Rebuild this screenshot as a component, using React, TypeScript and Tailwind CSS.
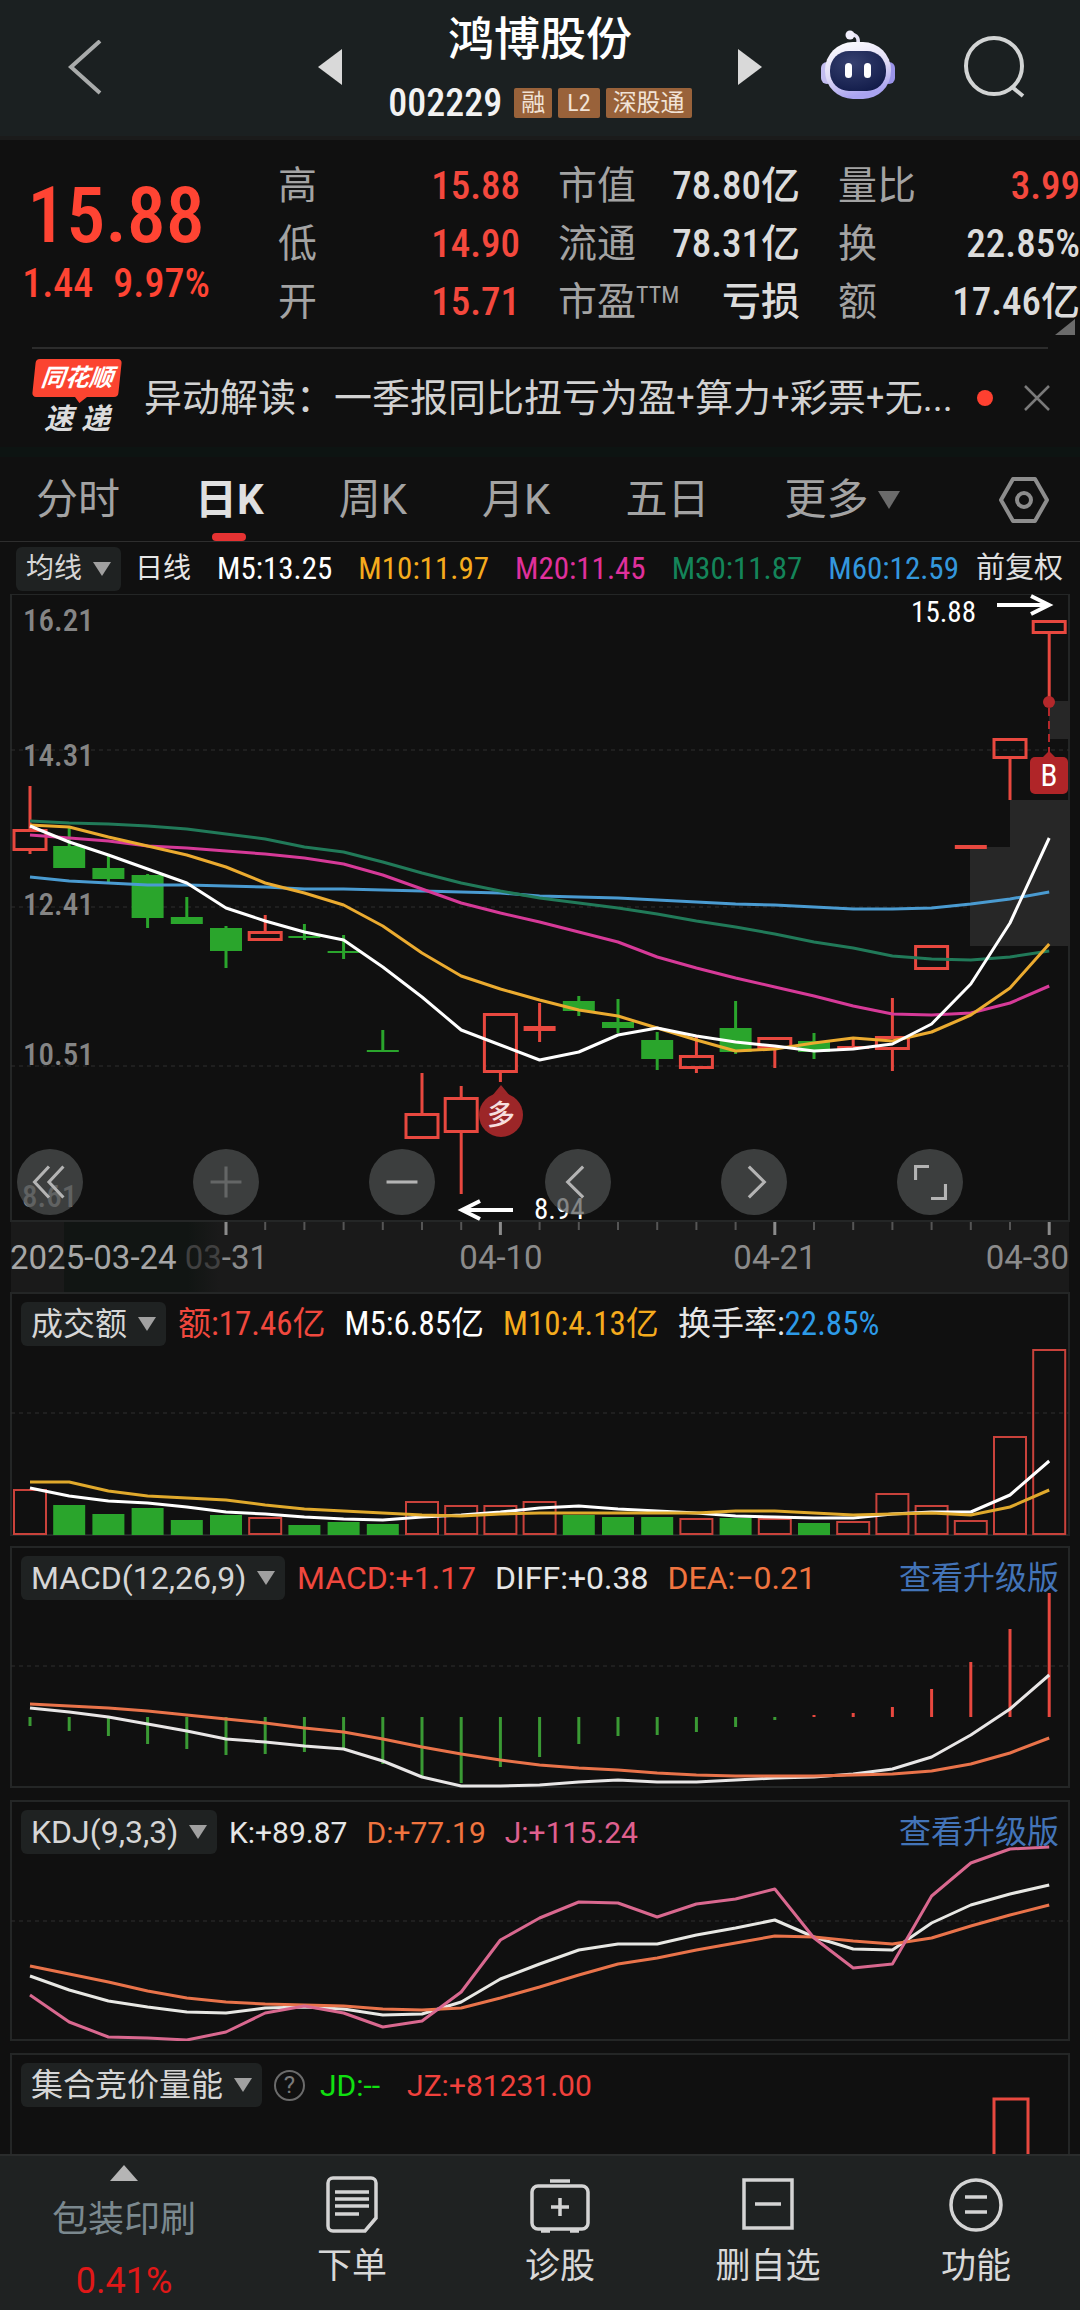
import React from "react";
import clsx from "clsx";

// Horizontal position of the n-th trading day, shared by all charts
const colX = (i: number) => 30 + i * 39.2;

const toPoints = (ys: number[]) => ys.map((y, i) => `${colX(i)},${y}`).join(" ");

const RED = "#e8483f";
const GREEN = "#2aa52c";

// [direction, body top, body bottom, wick top, wick bottom]
type Candle = ["up" | "down", number, number, number, number];

const candles: Candle[] = [
    ["up", 829, 851, 786, 854],
    ["down", 846, 868, 827, 868],
    ["down", 868, 879, 856, 882],
    ["down", 875, 918, 874, 928],
    ["down", 917, 924, 897, 924],
    ["down", 928, 951, 926, 968],
    ["up", 931, 941, 915, 941],
    ["down", 936, 938, 924, 940],
    ["down", 951, 953, 935, 959],
    ["down", 1050, 1052, 1030, 1052],
    ["up", 1113, 1139, 1073, 1139],
    ["up", 1097, 1133, 1086, 1194],
    ["up", 1013, 1073, 1013, 1082],
    ["up", 1026, 1031, 1003, 1042],
    ["down", 1001, 1011, 996, 1016],
    ["down", 1022, 1028, 999, 1033],
    ["down", 1040, 1059, 1032, 1070],
    ["up", 1055, 1069, 1037, 1073],
    ["down", 1028, 1052, 1001, 1054],
    ["up", 1037, 1049, 1037, 1068],
    ["down", 1041, 1052, 1033, 1059],
    ["up", 1046, 1049, 1038, 1049],
    ["up", 1036, 1050, 998, 1071],
    ["up", 945, 970, 945, 970],
    ["up", 845, 849, 845, 849],
    ["up", 738, 759, 738, 800],
    ["up", 620, 634, 620, 702],
];

const priceLines = [
    { color: "#4a9bd1", ys: [877, 881, 883, 885, 885, 886, 887, 889, 889, 890, 891, 892, 893, 896, 897, 898, 900, 902, 904, 905, 907, 909, 909, 908, 904, 899, 892] },
    { color: "#217a59", ys: [821, 823, 824, 826, 829, 834, 839, 847, 852, 862, 873, 883, 891, 898, 903, 908, 914, 921, 927, 934, 942, 948, 956, 959, 960, 957, 951] },
    { color: "#d63a98", ys: [835, 838, 841, 846, 848, 851, 854, 858, 864, 875, 889, 903, 913, 922, 932, 942, 957, 968, 978, 987, 996, 1006, 1014, 1015, 1013, 1003, 986] },
    { color: "#ebab30", ys: [825, 827, 837, 846, 855, 867, 883, 893, 905, 926, 953, 976, 989, 1000, 1010, 1016, 1028, 1040, 1051, 1049, 1043, 1038, 1041, 1032, 1015, 988, 944] },
    { color: "#ffffff", ys: [826, 842, 855, 869, 883, 908, 921, 932, 940, 967, 997, 1030, 1045, 1060, 1052, 1035, 1028, 1036, 1042, 1046, 1051, 1049, 1044, 1024, 984, 923, 838] },
];

const volumeTops = [1490, 1505, 1514, 1508, 1520, 1515, 1518, 1525, 1522, 1524, 1502, 1506, 1506, 1502, 1515, 1517, 1517, 1519, 1518, 1519, 1523, 1522, 1494, 1506, 1521, 1437, 1350];
const volumeM5 = [1488, 1496, 1501, 1503, 1507, 1512, 1514, 1517, 1519, 1520, 1517, 1515, 1512, 1508, 1506, 1509, 1511, 1513, 1516, 1517, 1518, 1518, 1514, 1512, 1512, 1495, 1461];
const volumeM10 = [1482, 1482, 1491, 1496, 1498, 1500, 1505, 1509, 1511, 1513, 1515, 1516, 1514, 1513, 1513, 1513, 1513, 1513, 1511, 1511, 1513, 1515, 1514, 1513, 1515, 1507, 1490];

const macdBars = [1726, 1731, 1736, 1744, 1749, 1755, 1754, 1752, 1749, 1764, 1777, 1783, 1767, 1757, 1744, 1736, 1735, 1732, 1727, 1720, 1715, 1713, 1707, 1689, 1662, 1629, 1593];
const macdDiff = [1708, 1712, 1717, 1724, 1731, 1739, 1742, 1746, 1749, 1761, 1777, 1786, 1786, 1785, 1782, 1780, 1782, 1782, 1780, 1778, 1777, 1774, 1769, 1757, 1735, 1709, 1675];
const macdDea = [1704, 1706, 1708, 1711, 1715, 1719, 1723, 1728, 1732, 1739, 1747, 1754, 1760, 1765, 1768, 1770, 1773, 1775, 1776, 1776, 1776, 1775, 1774, 1771, 1764, 1753, 1738];

const kdjK = [1976, 1990, 2001, 2007, 2012, 2013, 2008, 2007, 2009, 2015, 2014, 2002, 1979, 1964, 1950, 1944, 1944, 1935, 1928, 1920, 1937, 1949, 1950, 1923, 1905, 1894, 1885];
const kdjD = [1966, 1974, 1982, 1991, 1998, 2002, 2004, 2005, 2006, 2009, 2010, 2008, 1998, 1987, 1975, 1964, 1958, 1950, 1943, 1936, 1937, 1941, 1944, 1938, 1926, 1915, 1905];
const kdjJ = [1995, 2022, 2037, 2038, 2040, 2032, 2013, 2006, 2013, 2027, 2021, 1992, 1940, 1918, 1902, 1903, 1917, 1904, 1899, 1889, 1938, 1968, 1964, 1896, 1863, 1849, 1847];

const Line = ({ ys, color, width = 3 }: { ys: number[]; color: string; width?: number }) => (
    <polyline points={toPoints(ys)} fill="none" stroke={color} strokeWidth={width} strokeLinejoin="round" />
);

const GridLine = ({ y }: { y: number }) => (
    <line x1="11" x2="1069" y1={y} y2={y} stroke="#2e2e2e" strokeWidth="1" strokeDasharray="4 4" />
);

const Frame = ({ top, bottom }: { top: number; bottom: number }) => (
    <rect x="11" y={top + 1} width="1058" height={bottom - top - 2} fill="none" stroke="#242626" strokeWidth="2" />
);

const Triangle = ({ className }: { className?: string }) => (
    <svg viewBox="0 0 18 14" className={clsx("pointer-events-none h-[14px] w-[18px] shrink-0", className)} fill="currentColor" aria-hidden="true">
        <path d="M0 0h18L9 14z" />
    </svg>
);

const Picker = ({ name, value, className }: { name: string; value: string; className?: string }) => (
    <label className={clsx("flex h-[44px] items-center gap-[10px] rounded-md bg-[#1f2222] px-[10px] text-[#d6d6d6]", className)}>
        <select aria-label={name} className="appearance-none bg-transparent leading-[44px] outline-none">
            <option>{value}</option>
        </select>
        <Triangle className="text-[#a0a0a0]" />
    </label>
);

interface IndicatorPanelProps {
    name: string;
    viewBox: string;
    chart: React.ReactNode;
    children: React.ReactNode;
    className?: string;
    link?: boolean;
}

// Header row and drawing share one grid cell, so the chart runs beneath the texts
const IndicatorPanel = ({ name, viewBox, chart, children, className, link }: IndicatorPanelProps) => (
    <section className={clsx("grid", className)}>
        <svg viewBox={viewBox} className="col-start-1 row-start-1 block h-auto w-full" aria-hidden="true">
            {chart}
        </svg>
        <div className="z-10 col-start-1 row-start-1 mt-[10px] flex h-[44px] items-center gap-[19px] self-start px-[21px] whitespace-nowrap">
            <Picker name="指标" value={name} className="-mr-[7px] text-[32px]" />
            {children}
            {link && (
                <a href="#upgrade" className="ml-auto text-[32px] text-[#4374b8]">
                    查看升级版
                </a>
            )}
        </div>
    </section>
);

const Header = () => (
    <header className="grid h-[140px] grid-cols-[1fr_444px_1fr] items-center border-b-4 border-[#1b1b1b] bg-[#1b2021]">
        <button aria-label="返回" className="ml-[66px] justify-self-start">
            <svg viewBox="0 0 36 56" className="h-[56px] w-[36px]" fill="none" stroke="#a9abab" strokeWidth="4">
                <path d="M34 1 5 27l29 26" />
            </svg>
        </button>
        <div className="flex items-center justify-between">
            <button aria-label="上一只" className="pb-[2px]">
                <svg viewBox="0 0 24 36" className="h-[36px] w-[24px]" fill="#d9d9d9">
                    <path d="M24 0v36L0 18z" />
                </svg>
            </button>
            <div className="flex flex-col items-center pt-[6px]">
                <h1 className="text-[46px] leading-[64px] font-medium text-white">鸿博股份</h1>
                <div className="flex items-center gap-[6px] text-[24px] leading-[30px] text-[#f1e3d6]">
                    <span className="mr-[6px] text-[38px] leading-[64px] font-medium text-[#f2f2f2]">002229</span>
                    <span className="rounded-xs bg-[#99623a] px-[7px]">融</span>
                    <span className="rounded-xs bg-[#99623a] px-[9px]">L2</span>
                    <span className="rounded-xs bg-[#99623a] px-[7px]">深股通</span>
                </div>
            </div>
            <button aria-label="下一只" className="pb-[2px]">
                <svg viewBox="0 0 24 36" className="h-[36px] w-[24px]" fill="#d9d9d9">
                    <path d="M0 0v36l24-18z" />
                </svg>
            </button>
        </div>
        <div className="flex items-center justify-between pr-[54px] pl-[58px]">
            <button aria-label="智能助手" className="pb-[6px]">
                <svg viewBox="0 0 76 70" className="h-[70px] w-[76px]">
                    <defs>
                        <linearGradient id="shell" x1="0" y1="0" x2="0.3" y2="1">
                            <stop offset="0" stopColor="#ffffff" />
                            <stop offset="0.6" stopColor="#ded9f5" />
                            <stop offset="1" stopColor="#a9a3f0" />
                        </linearGradient>
                        <radialGradient id="visor" cx="0.4" cy="0.3" r="0.8">
                            <stop offset="0" stopColor="#36406f" />
                            <stop offset="1" stopColor="#101a48" />
                        </radialGradient>
                    </defs>
                    <path d="M38 14c1-6-1-9-7-10" fill="none" stroke="#e6e2f5" strokeWidth="3.5" />
                    <circle cx="30" cy="5" r="4.5" fill="#f1eefc" />
                    <rect x="1" y="32" width="12" height="22" rx="6" fill="#c3bdf0" />
                    <rect x="63" y="32" width="12" height="22" rx="6" fill="#9a93e8" />
                    <rect x="5" y="12" width="66" height="57" rx="28" fill="url(#shell)" />
                    <rect x="10" y="21" width="56" height="40" rx="19" fill="url(#visor)" />
                    <rect x="25" y="33" width="7" height="15" rx="3.5" fill="#fff" />
                    <rect x="44" y="33" width="7" height="15" rx="3.5" fill="#fff" />
                </svg>
            </button>
            <button aria-label="搜索">
                <svg viewBox="0 0 64 64" className="h-[64px] w-[64px]" fill="none" stroke="#d2d4d4" strokeWidth="4">
                    <circle cx="32" cy="30" r="28" />
                    <path d="M50 51l11 9" />
                </svg>
            </button>
        </div>
    </header>
);

interface Stat {
    label: React.ReactNode;
    value: string;
    up?: boolean;
}

const stats: Stat[] = [
    { label: "高", value: "15.88", up: true },
    { label: "市值", value: "78.80亿" },
    { label: "量比", value: "3.99", up: true },
    { label: "低", value: "14.90", up: true },
    { label: "流通", value: "78.31亿" },
    { label: "换", value: "22.85%" },
    { label: "开", value: "15.71", up: true },
    { label: <>市盈<sup className="top-0 align-[12px] text-[24px] leading-none">TTM</sup></>, value: "亏损" },
    { label: "额", value: "17.46亿" },
];

const Quote = () => (
    <section className="relative flex pt-[17px] pb-4">
        <div className="w-[278px] pt-[18px]">
            <div className="w-[232px] text-center font-medium text-[#ff4433]">
                <p className="text-[78px] leading-[82px]">15.88</p>
                <p className="flex justify-center gap-5 text-[40px] leading-[54px]">
                    <span>1.44</span>
                    <span>9.97%</span>
                </p>
            </div>
        </div>
        <dl className="grid flex-1 grid-cols-3 gap-x-[38px] text-[39px] leading-[58px] whitespace-nowrap">
            {stats.map(({ label, value, up }) => (
                <div className="flex justify-between" key={value}>
                    <dt className="text-[#a3a3a3]">{label}</dt>
                    <dd className={clsx("font-medium", up ? "text-[#f4483d]" : "text-[#dcdcdc]")}>{value}</dd>
                </div>
            ))}
        </dl>
        <svg viewBox="0 0 20 16" className="absolute right-[5px] bottom-[12px] h-[16px] w-[20px]" fill="#6b6b6b" aria-hidden="true">
            <path d="M20 0v16H0z" />
        </svg>
    </section>
);

const News = () => (
    <section className="mx-8 flex h-[100px] items-center border-t-2 border-[#2c2c2c]">
        <div className="flex w-[90px] flex-col items-center font-bold italic">
            <span className="relative -skew-x-6 rounded-sm bg-[#fb4430] px-[7px] text-[24px] leading-[38px] text-white">
                同花顺
                <svg viewBox="0 0 12 6" className="absolute top-full left-1/2 h-[6px] w-[12px]" fill="#fb4430" aria-hidden="true">
                    <path d="M0 0h12L5 6z" />
                </svg>
            </span>
            <span className="flex gap-2 pt-1 text-[29px] leading-[36px] text-[#dcdcdc]">
                <span>速</span>
                <span>递</span>
            </span>
        </div>
        <a href="#news" className="ml-[22px] min-w-0 flex-1 truncate text-[38px] leading-[56px] text-[#d2d2d2]">
            异动解读：一季报同比扭亏为盈+算力+彩票+无...
        </a>
        <span className="mr-[31px] ml-4 size-4 rounded-full bg-[#ff4030]" />
        <button aria-label="关闭" className="-mr-[2px]">
            <svg viewBox="0 0 26 26" className="size-[26px]" stroke="#7a7a7a" strokeWidth="2.5">
                <path d="M1 1l24 24M25 1L1 25" />
            </svg>
        </button>
    </section>
);

const tabs = ["分时", "日K", "周K", "月K", "五日"];

const Tabs = () => (
    <nav className="flex h-[84px] items-stretch gap-[75px] border-b border-[#2e2e2e] px-[36px] font-[Roboto,'Noto_Sans_CJK_SC',sans-serif] text-[42px] whitespace-nowrap text-[#a3a3a3]">
        {tabs.map((tab) => (
            <button key={tab} className={clsx("relative", tab === "日K" && "font-bold text-[#e0e0e0]")}>
                {tab}
                {tab === "日K" && <span className="absolute bottom-0 left-1/2 h-2 w-[34px] -translate-x-1/2 rounded-sm bg-[#e63232]" />}
            </button>
        ))}
        <button className="flex items-center gap-[10px]">
            更多
            <svg viewBox="0 0 22 18" className="h-[18px] w-[22px]" fill="#6b6b6b" aria-hidden="true">
                <path d="M0 0h22L11 18z" />
            </svg>
        </button>
        <button aria-label="设置" className="-mr-[6px] ml-auto">
            <svg viewBox="0 0 52 48" className="h-[48px] w-[52px]" fill="none" stroke="#8d8d8d" strokeWidth="4" strokeLinejoin="round">
                <path d="M15 3h22l12 21-12 21H15L3 24z" />
                <circle cx="26" cy="24" r="7" />
            </svg>
        </button>
    </nav>
);

const Averages = () => (
    <div className="flex h-[52px] items-center gap-[26px] px-4 pt-[2px] text-[31px] whitespace-nowrap">
        <Picker name="均线" value="均线" className="-mr-[12px] text-[28px]" />
        <span className="text-[28px] text-[#e6e6e6]">日线</span>
        <span className="text-white">M5:13.25</span>
        <span className="text-[#f5ab1d]">M10:11.97</span>
        <span className="text-[#e0309c]">M20:11.45</span>
        <span className="text-[#14855a]">M30:11.87</span>
        <span className="text-[#3497dc]">M60:12.59</span>
        <span className="-ml-[9px] text-[29px] text-[#e0e0e0]">前复权</span>
    </div>
);

const priceLabels: [string, number][] = [["16.21", 631], ["14.31", 766], ["12.41", 915], ["10.51", 1065]];

const chartButtons = [
    { name: "最早", d: "M31 17 17 32l14 15M45 17 31 32l14 15", color: "#b4b4b4" },
    { name: "放大", d: "M17 32h30M32 17v30", color: "#646666" },
    { name: "缩小", d: "M17 32h30", color: "#b4b4b4" },
    { name: "向左", d: "M37 17 22 32l15 15", color: "#b4b4b4" },
    { name: "向右", d: "M27 17l15 15-15 15", color: "#b4b4b4" },
    { name: "全屏", d: "M18 30V17h13M47 34v14H33", color: "#b4b4b4" },
];

const CandleShape = ({ candle, x }: { candle: Candle; x: number }) => {
    const [dir, top, bottom, high, low] = candle;
    const color = dir === "up" ? RED : GREEN;
    const solid = dir === "down" || bottom - top < 6;
    return (
        <g>
            {high < top && <line x1={x} x2={x} y1={high} y2={top} stroke={color} strokeWidth="3" />}
            {low > bottom && <line x1={x} x2={x} y1={bottom} y2={low} stroke={color} strokeWidth="3" />}
            {solid ? (
                <rect x={x - 16} y={top} width="32" height={bottom - top} fill={color} />
            ) : (
                <rect x={x - 16} y={top + 1.5} width="32" height={bottom - top - 3} fill="none" stroke={color} strokeWidth="3" />
            )}
        </g>
    );
};

const PriceChart = () => (
    <section className="relative">
        <svg viewBox="0 594 1080 698" className="block h-auto w-full">
            <defs>
                <linearGradient id="fade">
                    <stop offset="0" stopColor="#111513" />
                    <stop offset="0.8" stopColor="#111513" />
                    <stop offset="1" stopColor="#1a1a1a" />
                </linearGradient>
            </defs>
            <rect x="11" y="1221" width="1058" height="71" fill="#1a1a1a" />
            <rect x="64" y="1221" width="155" height="71" fill="url(#fade)" />
            <Frame top={593} bottom={1222} />
            {[750, 907, 1066].map((y) => <GridLine key={y} y={y} />)}
            <g fill="#272727">
                <rect x="1049" y="701" width="21" height="38" />
                <rect x="1010" y="800" width="60" height="48" />
                <rect x="970" y="847" width="100" height="99" />
            </g>
            <g fontSize="31" fontWeight="500" fill="#858585">
                {priceLabels.map(([label, y]) => <text key={label} x="23" y={y}>{label}</text>)}
                <text x="22" y="1207">8.61</text>
            </g>
            {candles.map((candle, i) => <CandleShape key={i} candle={candle} x={colX(i)} />)}
            {priceLines.map((line) => <Line key={line.color} {...line} />)}

            <g fontSize="29" fill="#fff">
                <text x="976" y="622" textAnchor="end">15.88</text>
                <text x="534" y="1219">8.94</text>
            </g>
            <g fill="none" stroke="#fff" strokeWidth="4">
                <path d="M997 605h52M1031 596l18 9-18 9" />
                <path d="M513 1210h-51M480 1201l-18 9 18 9" />
            </g>

            <circle cx="1049" cy="702" r="6" fill="#b4282b" />
            <line x1="1049" x2="1049" y1="708" y2="754" stroke="#b4282b" strokeWidth="2" strokeDasharray="8 5" />
            <path d="M1042 758l7-7 7 7z" fill="#b02528" />
            <rect x="1030" y="757" width="38" height="37" rx="5" fill="#b02528" />
            <text x="1049" y="786" textAnchor="middle" fontSize="31" fill="#fff">B</text>

            <path d="M492 1096l9-11 9 11z" fill="#9c2628" />
            <circle cx="501" cy="1115" r="22" fill="#9c2628" />
            <text x="501" y="1125" textAnchor="middle" fontSize="28" fontWeight="500" fill="#f6dede">多</text>

            {candles.map((_, i) => {
                if (i < 5) return null;
                const major = i % 7 === 5;
                return <line key={i} x1={colX(i)} x2={colX(i)} y1="1222" y2={major ? 1235 : 1230} stroke={major ? "#8b8b8b" : "#555"} strokeWidth={major ? 3 : 2} />;
            })}
            <g fontSize="33" fill="#8b8b8b" className="font-[Roboto,sans-serif]">
                <text x="10" y="1269" fill="#a6a6a6">2025-03-24</text>
                <text x="268" y="1269" textAnchor="end"><tspan fill="#404040">03</tspan>-31</text>
                <text x="501" y="1269" textAnchor="middle">04-10</text>
                <text x="775" y="1269" textAnchor="middle">04-21</text>
                <text x="1069" y="1269" textAnchor="end">04-30</text>
            </g>
        </svg>
        <div className="absolute right-[117px] bottom-[77px] left-[17px] flex justify-between">
            {chartButtons.map(({ name, d, color }) => (
                <button key={name} aria-label={name} className="size-[66px] rounded-full bg-[#505252]/70">
                    <svg viewBox="0 0 64 64" className="size-full" fill="none" stroke={color} strokeWidth="3">
                        <path d={d} />
                    </svg>
                </button>
            ))}
        </div>
    </section>
);

const Volume = () => (
    <IndicatorPanel
        name="成交额"
        viewBox="0 1292 1080 244"
        className="text-[33px]"
        chart={
            <>
                <Frame top={1292} bottom={1536} />
                <GridLine y={1413} />
                {volumeTops.map((top, i) => {
                    const x = colX(i) - 16;
                    return candles[i][0] === "up" ? (
                        <rect key={i} x={x} y={top} width="32" height={1534 - top} fill="none" stroke="#c9423b" strokeWidth="2" />
                    ) : (
                        <rect key={i} x={x} y={top} width="32" height={1535 - top} fill={GREEN} />
                    );
                })}
                <Line ys={volumeM5} color="#fff" />
                <Line ys={volumeM10} color="#e0a92c" />
            </>
        }
    >
        <span className="text-[#f0483e]">额:17.46亿</span>
        <span className="text-white">M5:6.85亿</span>
        <span className="text-[#f5ab1d]">M10:4.13亿</span>
        <span className="text-[#e6e6e6]">
            换手率:<span className="text-[#2d9be8]">22.85%</span>
        </span>
    </IndicatorPanel>
);

const Macd = () => (
    <IndicatorPanel
        link
        name="MACD(12,26,9)"
        viewBox="0 1546 1080 242"
        className="font-[Roboto,'Noto_Sans_CJK_SC',sans-serif] text-[32px]"
        chart={
            <>
                <Frame top={1546} bottom={1788} />
                <GridLine y={1666} />
                {macdBars.map((y, i) => (
                    <line key={i} x1={colX(i)} x2={colX(i)} y1="1717" y2={y} stroke={y > 1717 ? "#3a9a34" : RED} strokeWidth="3" />
                ))}
                <Line ys={macdDiff} color="#e8e6e6" />
                <Line ys={macdDea} color="#e9734a" />
            </>
        }
    >
        <span className="text-[#f0483e]">MACD:+1.17</span>
        <span className="text-[#e6e6e6]">DIFF:+0.38</span>
        <span className="text-[#f0743f]">DEA:−0.21</span>
    </IndicatorPanel>
);

const Kdj = () => (
    <IndicatorPanel
        link
        name="KDJ(9,3,3)"
        viewBox="0 1800 1080 241"
        className="font-[Roboto,'Noto_Sans_CJK_SC',sans-serif] text-[30px]"
        chart={
            <>
                <Frame top={1800} bottom={2041} />
                <GridLine y={1921} />
                <Line ys={kdjK} color="#e8e8e4" />
                <Line ys={kdjD} color="#e9734a" />
                <Line ys={kdjJ} color="#d9688f" />
            </>
        }
    >
        <span className="text-[#e6e6e6]">K:+89.87</span>
        <span className="text-[#f0743f]">D:+77.19</span>
        <span className="text-[#e0608f]">J:+115.24</span>
    </IndicatorPanel>
);

const Auction = () => (
    <IndicatorPanel
        name="集合竞价量能"
        viewBox="0 2053 1080 101"
        className="font-[Roboto,'Noto_Sans_CJK_SC',sans-serif] text-[30px]"
        chart={
            <>
                <Frame top={2053} bottom={2170} />
                <rect x="994" y="2099" width="34" height="80" fill="none" stroke={RED} strokeWidth="3" />
            </>
        }
    >
        <button aria-label="说明" className="size-[31px] rounded-full border-2 border-[#6b6b6b] text-center text-[24px] leading-[27px] text-[#7a7a7a]">?</button>
        <span className="-ml-1 text-[#10e010]">JD:--</span>
        <span className="ml-2 text-[#f0413c]">JZ:+81231.00</span>
    </IndicatorPanel>
);

const actions = [
    {
        label: "下单",
        icon: (
            <>
                <path d="M9 4h38a5 5 0 0 1 5 5v35L41 57H9a5 5 0 0 1-5-5V9a5 5 0 0 1 5-5z" />
                <path d="M11 18h34M11 25h34M11 32h34M11 40h24" />
            </>
        ),
    },
    {
        label: "诊股",
        icon: (
            <>
                <rect x="0" y="12" width="56" height="43" rx="6" />
                <path d="M18 7h20M28 24v18M19 33h18M9 57h9M38 57h9" />
            </>
        ),
    },
    {
        label: "删自选",
        icon: (
            <>
                <rect x="4" y="6" width="48" height="48" />
                <path d="M15 30h26" />
            </>
        ),
    },
    {
        label: "功能",
        icon: (
            <>
                <circle cx="28" cy="31" r="25" />
                <path d="M17 23h22M17 38h22" />
            </>
        ),
    },
];

const BottomBar = () => (
    <footer className="flex min-h-[156px] flex-1 items-start border-t-2 border-[#2a2c2c] bg-[#1f2222]">
        <button className="flex w-[248px] flex-col items-center pt-[9px]">
            <svg viewBox="0 0 28 16" className="h-[16px] w-[28px]" fill="#b5b5b5" aria-hidden="true">
                <path d="M14 0l14 16H0z" />
            </svg>
            <span className="pt-[11px] text-[36px] leading-[56px] text-[#7b898f]">包装印刷</span>
            <span className="pt-[5px] font-[Roboto,sans-serif] text-[36px] leading-[56px] text-[#e01818]">0.41%</span>
        </button>
        {actions.map(({ label, icon }) => (
            <button key={label} className="flex flex-1 flex-col items-center pt-[18px]">
                <svg viewBox="-4 0 64 62" className="h-[62px] w-[64px]" fill="none" stroke="#d4d4d4" strokeWidth="3.5" aria-hidden="true">
                    {icon}
                </svg>
                <span className="pt-[7px] text-[35px] leading-[48px] text-[#d8d8d8]">{label}</span>
            </button>
        ))}
    </footer>
);

export default function App() {
    return (
        <div className="flex min-h-screen flex-col bg-[#101010] font-['Roboto_Condensed',Roboto,'Noto_Sans_CJK_SC',sans-serif]">
            <Header />
            <Quote />
            <News />
            <div className="mb-[1px] h-[10px] bg-[#0d1412]" />
            <Tabs />
            <Averages />
            <main className="flex flex-col">
                <PriceChart />
                <Volume />
                <div className="h-[10px]" />
                <Macd />
                <div className="h-3" />
                <Kdj />
                <div className="h-3" />
                <Auction />
            </main>
            <BottomBar />
        </div>
    );
}
